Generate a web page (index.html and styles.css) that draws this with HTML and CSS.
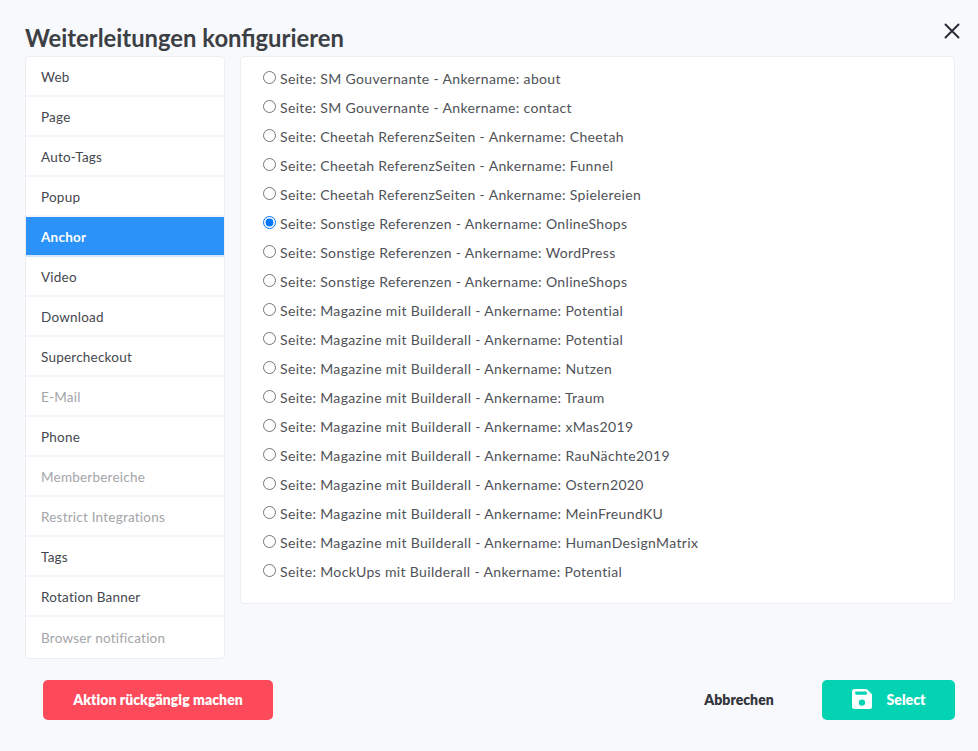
FILE: index.html
```html
<!DOCTYPE html>
<html lang="de">
<head>
<meta charset="utf-8">
<title>Weiterleitungen konfigurieren</title>
<link rel="stylesheet" href="styles.css">
</head>
<body>
<div class="modal">
  <button class="close" aria-label="Schließen">
    <svg width="16" height="16" viewBox="0 0 16 16"><path d="M1.5 1.5 14.5 14.5M14.5 1.5 1.5 14.5" fill="none" stroke="#2b2f3a" stroke-width="2" stroke-linecap="round"/></svg>
  </button>
  <h1 class="title">Weiterleitungen konfigurieren</h1>
  <div class="content">
    <nav class="tabs">
      <div class="tab">Web</div>
      <div class="tab">Page</div>
      <div class="tab">Auto-Tags</div>
      <div class="tab">Popup</div>
      <div class="tab active">Anchor</div>
      <div class="tab">Video</div>
      <div class="tab">Download</div>
      <div class="tab">Supercheckout</div>
      <div class="tab muted">E-Mail</div>
      <div class="tab">Phone</div>
      <div class="tab muted">Memberbereiche</div>
      <div class="tab muted">Restrict Integrations</div>
      <div class="tab">Tags</div>
      <div class="tab">Rotation Banner</div>
      <div class="tab muted last">Browser notification</div>
    </nav>
    <form class="panel">
      <label class="row"><input type="radio" name="a"><span>Seite: SM Gouvernante - Ankername: about</span></label>
      <label class="row"><input type="radio" name="a"><span>Seite: SM Gouvernante - Ankername: contact</span></label>
      <label class="row"><input type="radio" name="a"><span>Seite: Cheetah ReferenzSeiten - Ankername: Cheetah</span></label>
      <label class="row"><input type="radio" name="a"><span>Seite: Cheetah ReferenzSeiten - Ankername: Funnel</span></label>
      <label class="row"><input type="radio" name="a"><span>Seite: Cheetah ReferenzSeiten - Ankername: Spielereien</span></label>
      <label class="row"><input type="radio" name="a" checked><span>Seite: Sonstige Referenzen - Ankername: OnlineShops</span></label>
      <label class="row"><input type="radio" name="a"><span>Seite: Sonstige Referenzen - Ankername: WordPress</span></label>
      <label class="row"><input type="radio" name="a"><span>Seite: Sonstige Referenzen - Ankername: OnlineShops</span></label>
      <label class="row"><input type="radio" name="a"><span>Seite: Magazine mit Builderall - Ankername: Potential</span></label>
      <label class="row"><input type="radio" name="a"><span>Seite: Magazine mit Builderall - Ankername: Potential</span></label>
      <label class="row"><input type="radio" name="a"><span>Seite: Magazine mit Builderall - Ankername: Nutzen</span></label>
      <label class="row"><input type="radio" name="a"><span>Seite: Magazine mit Builderall - Ankername: Traum</span></label>
      <label class="row"><input type="radio" name="a"><span>Seite: Magazine mit Builderall - Ankername: xMas2019</span></label>
      <label class="row"><input type="radio" name="a"><span>Seite: Magazine mit Builderall - Ankername: RauNächte2019</span></label>
      <label class="row"><input type="radio" name="a"><span>Seite: Magazine mit Builderall - Ankername: Ostern2020</span></label>
      <label class="row"><input type="radio" name="a"><span>Seite: Magazine mit Builderall - Ankername: MeinFreundKU</span></label>
      <label class="row"><input type="radio" name="a"><span>Seite: Magazine mit Builderall - Ankername: HumanDesignMatrix</span></label>
      <label class="row"><input type="radio" name="a"><span>Seite: MockUps mit Builderall - Ankername: Potential</span></label>
    </form>
  </div>
  <footer class="footer">
    <button class="btn danger">Aktion rückgängig machen</button>
    <div class="actions">
      <button class="btn ghost">Abbrechen</button>
      <button class="btn success">
        <svg width="20" height="20" viewBox="0 0 20 20"><path fill-rule="evenodd" d="M2.5 0H14.6L20 5.2V17.5A2.5 2.5 0 0 1 17.5 20H2.5A2.5 2.5 0 0 1 0 17.5V2.5A2.5 2.5 0 0 1 2.5 0ZM4.2 2.4A1 1 0 0 0 3.2 3.4V4.8A1 1 0 0 0 4.2 5.8H14A1 1 0 0 0 15 4.8V3.4A1 1 0 0 0 14 2.4ZM10 10.4A3.2 3.2 0 1 0 10 16.8A3.2 3.2 0 1 0 10 10.4Z" fill="#fff"/></svg>
        <span>Select</span>
      </button>
    </div>
  </footer>
</div>
</body>
</html>
```
FILE: styles.css
```css
* { box-sizing: border-box; }
html, body { margin: 0; height: 100%; }
body {
  background: #f8f9fd;
  font-family: "Lato", "Open Sans", sans-serif;
  color: #4a4d55;
  overflow: hidden;
}
.modal {
  position: relative;
  padding: 25px 23px 0 25px;
}
.close {
  position: absolute;
  top: 23px;
  right: 18px;
  padding: 0;
  border: 0;
  background: none;
  line-height: 0;
}
.title {
  margin: 0 0 5px;
  font-size: 23.8px;
  line-height: 26px;
  font-weight: 700;
  color: #3c3f44;
}
.content {
  display: flex;
  align-items: flex-start;
  gap: 15px;
}
.tabs {
  flex: 0 0 200px;
  background: #fff;
  border: 1px solid #eceef3;
  border-radius: 4px;
  overflow: hidden;
}
.tab {
  height: 40px;
  padding: 2px 15px 0;
  display: flex;
  align-items: center;
  font-size: 13.5px;
  letter-spacing: 0.22px;
  color: #44474e;
  border-bottom: 2px solid #f4f5f8;
}
.tab.active {
  background: #2a92f8;
  color: #fff;
  font-weight: 700;
  border-bottom-color: #d3e6fb;
}
.tab.muted { color: #a3a5a9; }
.tab.last { border-bottom: 0; height: 41px; padding-top: 0; }
.panel {
  flex: 1;
  height: 548px;
  padding: 7px 22px;
  background: #fff;
  border: 1px solid #eceef3;
  border-radius: 4px;
}
.row {
  height: 29px;
  display: flex;
  align-items: center;
  font-size: 14px;
  letter-spacing: 0.35px;
  color: #4f5258;
}
.row input {
  width: 13px;
  height: 13px;
  margin: 0 4px 3px 0;
  flex: none;
}
.footer {
  display: flex;
  justify-content: space-between;
  align-items: center;
  padding: 21px 0 0 18px;
}
.actions {
  display: flex;
  align-items: center;
  gap: 25px;
}
.btn {
  height: 40px;
  padding: 0 0 2px;
  border: 0;
  border-radius: 5px;
  font-family: inherit;
  font-size: 14px;
  letter-spacing: 0.05px;
  font-weight: 800;
  display: flex;
  align-items: center;
  justify-content: center;
}
.danger {
  width: 230px;
  background: #fc4a5b;
  color: #fff;
}
.ghost {
  width: 116px;
  background: none;
  color: #33363c;
}
.success {
  width: 133px;
  gap: 15px;
  background: #03d3b3;
  color: #fff;
}
```
